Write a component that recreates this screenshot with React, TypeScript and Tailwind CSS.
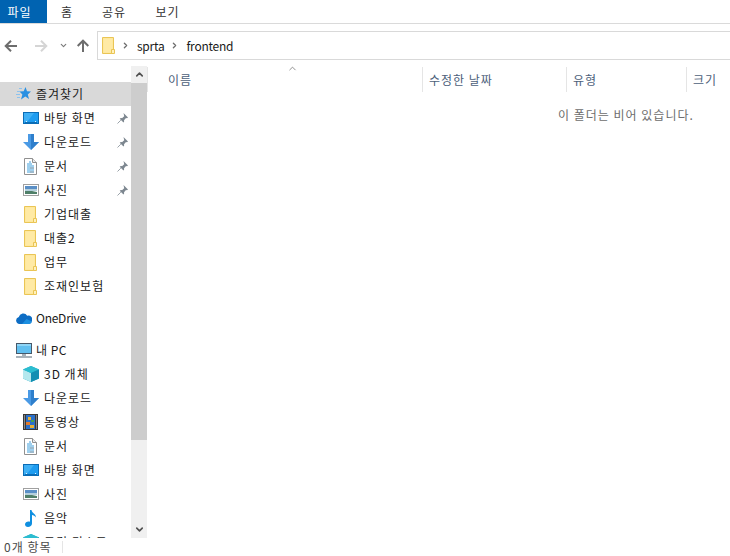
import { ChevronUp, ChevronDown, ChevronRight } from "lucide-react";

const font = "font-['Noto_Sans_CJK_KR','Noto_Sans',sans-serif]";

const Folder = () => (
  <svg width="13" height="17" viewBox="0 0 13 17" className="shrink-0">
    <path d="M.5.5h11v16H.5z" fill="#fee595" stroke="#eac555" />
    <path d="M1.500 1.500h9v14h-9z" fill="#ffeaa5" />
    <path d="M9.500 12.500h3v4h-3z" fill="#fff1bd" stroke="#eac555" />
  </svg>
);

const Desktop = () => (
  <svg width="16" height="12" viewBox="0 0 16 12" className="shrink-0">
    <rect x="0.500" y="0.500" width="15" height="11" fill="#1e9cf0" stroke="#0b6cb5" />
    <path d="M1 1h10L4 10H1z" fill="#3fb0f5" />
    <path d="M2 10.500h12" stroke="#0b6cb5" />
    <path d="M3 9.500h1M12 9.500h1" stroke="#d8f0ff" />
  </svg>
);

const Download = () => (
  <svg width="16" height="16" viewBox="0 0 16 16" className="shrink-0">
    <path d="M5 0h6v8h5l-8 8-8-8h5z" fill="#4a9ae5" />
    <path d="M8 0h3v8h5l-8 8z" fill="#2f7fcc" />
  </svg>
);

const Doc = () => (
  <svg width="13" height="17" viewBox="0 0 13 17" className="shrink-0">
    <path d="M.5.5h8l4 4v12H.5z" fill="#fff" stroke="#909090" />
    <path d="M8.500.500v4h4" fill="#e8e8e8" stroke="#909090" />
    <path d="M5 4h2M3 6h5M3 8h7M3 10h7M3 12h7M3 14h7" stroke="#3f9fdc" />
    <path d="M6 10h4M6 14h4" stroke="#9aa4ac" />
  </svg>
);

const Picture = () => (
  <svg width="16" height="12" viewBox="0 0 16 12" className="shrink-0">
    <rect x="0.500" y="0.500" width="15" height="11" fill="#fff" stroke="#a0a0a0" />
    <rect x="2" y="2" width="12" height="3" fill="#5a8fc6" />
    <rect x="2" y="5" width="12" height="2" fill="#b4cfdc" />
    <path d="M2 7h7l5 1v2H2z" fill="#4f7f68" />
  </svg>
);

const Film = () => (
  <svg width="15" height="16" viewBox="0 0 15 16" className="shrink-0">
    <rect width="15" height="16" fill="#383838" />
    <rect x="3" y="1" width="9" height="14" fill="#2a6fc9" />
    <path d="M5 3h3v3H5z" fill="#e6b034" />
    <path d="M8 6h3v2H8z" fill="#4aa04a" />
    <path d="M3 8h4v3H3z" fill="#e07c2e" />
    <path d="M7 11h4v3H7z" fill="#e6b034" />
    <path d="M1 2h1M1 4h1M1 6h1M1 8h1M1 10h1M1 12h1M1 14h1M13 2h1M13 4h1M13 6h1M13 8h1M13 10h1M13 12h1M13 14h1" stroke="#d8d8d8" />
  </svg>
);

const Music = () => (
  <svg width="12" height="17" viewBox="0 0 12 17" className="shrink-0">
    <path d="M5 0h1.500c.3 3 4.500 3.500 4.500 7.500-1-1.600-2.600-2.400-4-2.600V13.500C7 15.600 5 17 3 17S0 15.800 0 14.200 1.800 11.400 3.400 11.400c.6 0 1.200.1 1.600.4z" fill="#0f8fe0" />
  </svg>
);

const Cube = () => (
  <svg width="16" height="16" viewBox="0 0 16 16" className="shrink-0">
    <path d="M8 0l8 3.500v9L8 16l-8-3.500v-9z" fill="#1fa8c2" />
    <path d="M0 3.500L8 7v9l-8-3.500z" fill="#b5e8ee" />
    <path d="M8 0l8 3.500L8 7 0 3.500z" fill="#2cbdd0" />
    <path d="M8 7l8-3.500v9L8 16z" fill="#148fb2" />
  </svg>
);

const Star = () => (
  <svg width="15" height="14" viewBox="0 0 15 14" className="shrink-0">
    <path d="M9.500 0l1.500 4.200 4 .3-3.200 2.900 1.200 4.600-3.700-2.500-4.300 3 1.400-5L3.500 4.600l4.200-.4z" fill="#2a90e2" />
    <path d="M3 1.500h3M1 4.500h3M0 7.500h4M1 10.500h3" stroke="#8cc2ee" />
  </svg>
);

const Cloud = () => (
  <svg width="16" height="11" viewBox="0 0 16 11" className="shrink-0">
    <path d="M3.500 11A3.500 3.500 0 0 1 2.800 4.100 4.600 4.600 0 0 1 11.200 2.700 3.900 3.900 0 0 1 15.900 8 3.300 3.300 0 0 1 13 11z" fill="#0d6dc4" />
    <path d="M6 11l4.500-5 5.400 2.500A3 3 0 0 1 13 11z" fill="#1c8fe0" />
  </svg>
);

const Monitor = () => (
  <svg width="16" height="15" viewBox="0 0 16 15" className="shrink-0">
    <rect x="0.500" y="0.500" width="15" height="10" fill="#62c0f0" stroke="#47596a" />
    <path d="M1 1h14v2H1z" fill="#8fd5f6" />
    <path d="M6 11h4v2H6z" fill="#a8b2ba" />
    <path d="M0 14h16" stroke="#8c98a2" strokeWidth="1.500" />
  </svg>
);

const PinIcon = () => (
  <svg width="11" height="11" viewBox="0 0 11 11" className="absolute left-[117px] top-[7px]">
    <path d="M6.500 0L11 4.500l-1 .7-1-.2-2 2.200c.3 1 .1 1.700-.5 2.300L2.700 5.700c.6-.6 1.300-.8 2.300-.5l2.200-2-.2-1z" fill="#7d8790" />
    <path d="M.500 10.500L3.800 7.200" stroke="#9aa2a9" />
  </svg>
);

const Arrow = ({ dir, color }: { dir: "l" | "r" | "u"; color: string }) => (
  <svg width="14" height="14" viewBox="0 0 14 14" fill="none" stroke={color} strokeWidth="2" className={`shrink-0 ${dir === "r" ? "rotate-180" : dir === "u" ? "rotate-90" : ""}`}>
    <path d="M13 7H2M7 1.700L1.700 7 7 12.300" />
  </svg>
);

type Item = { label: string; icon: React.ReactNode; pin?: boolean; active?: boolean; indent?: boolean; gap?: boolean; track?: string };

const items: Item[] = [
  { label: "즐겨찾기", icon: <Star />, active: true },
  { label: "바탕 화면", icon: <Desktop />, pin: true, indent: true },
  { label: "다운로드", icon: <Download />, pin: true, indent: true },
  { label: "문서", icon: <Doc />, pin: true, indent: true },
  { label: "사진", icon: <Picture />, pin: true, indent: true },
  { label: "기업대출", icon: <Folder />, indent: true },
  { label: "대출2", icon: <Folder />, indent: true },
  { label: "업무", icon: <Folder />, indent: true },
  { label: "조재인보험", icon: <Folder />, indent: true },
  { label: "OneDrive", icon: <Cloud />, gap: true, track: "tracking-[-0.25px]" },
  { label: "내 PC", icon: <Monitor />, gap: true, track: "tracking-[0.5px]" },
  { label: "3D 개체", icon: <Cube />, indent: true },
  { label: "다운로드", icon: <Download />, indent: true },
  { label: "동영상", icon: <Film />, indent: true },
  { label: "문서", icon: <Doc />, indent: true },
  { label: "바탕 화면", icon: <Desktop />, indent: true },
  { label: "사진", icon: <Picture />, indent: true },
  { label: "음악", icon: <Music />, indent: true },
  { label: "로컬 디스크", icon: <Cube />, indent: true },
];

const NavRow = ({ item }: { item: Item }) => (
  <div className={`relative flex h-6 shrink-0 items-center ${item.gap ? "mt-2" : ""} ${item.active ? "bg-[#d9d9d9]" : ""}`}>
    <div className={`flex w-[17px] items-center justify-center ${item.indent ? "ml-[22px]" : "ml-[15px]"}`}>{item.icon}</div>
    <span className={`text-[12px] leading-6 text-[#1a1a1a] ${item.track ?? "tracking-[1px]"} ${item.indent ? "ml-[5px]" : "ml-[4px]"}`}>{item.label}</span>
    {item.pin && <PinIcon />}
  </div>
);

const Col = ({ label, width }: { label: string; width: string }) => (
  <div className={`flex h-[25px] shrink-0 items-center border-l border-[#e5e5e5] pl-[6px] text-[12px] tracking-[1px] text-[#4c607a] ${width}`}>{label}</div>
);

export default function App() {
  return (
    <div className={`${font} flex h-[556px] w-[730px] flex-col overflow-hidden bg-white`}>
      {/* ribbon tabs */}
      <div className="flex h-[24px] shrink-0 items-stretch border-b border-[#dadada] text-[12px] tracking-[1px] text-[#333]">
        <div className="flex h-[23px] w-[47px] items-center justify-center bg-[#0063b1] pr-[8px] text-white">파일</div>
        <div className="flex h-[23px] w-[40px] items-center justify-center">홈</div>
        <div className="flex h-[23px] w-[54px] items-center justify-center">공유</div>
        <div className="flex h-[23px] w-[53px] items-center justify-center">보기</div>
      </div>

      {/* address row */}
      <div className="flex h-[36px] shrink-0 items-start pt-[7px]">
        <div className="flex h-[29px] w-[97px] shrink-0 items-center">
          <div className="ml-[4px]"><Arrow dir="l" color="#6d6d6d" /></div>
          <div className="ml-[16px]"><Arrow dir="r" color="#d5d5d5" /></div>
          <ChevronDown size={9} strokeWidth={3} className="ml-[11px] text-[#7a7a7a]" />
          <div className="ml-[8px]"><Arrow dir="u" color="#6d6d6d" /></div>
        </div>
        <div className="flex h-[29px] flex-1 items-center border border-r-0 border-[#d9d9d9] pl-[4px] text-[12px] tracking-[-0.25px] text-[#1a1a1a]">
          <Folder />
          <ChevronRight size={9} strokeWidth={3.500} className="ml-[6px] text-[#6d6d6d]" />
          <span className="ml-[7px]">sprta</span>
          <ChevronRight size={9} strokeWidth={3.500} className="ml-[6px] text-[#6d6d6d]" />
          <span className="ml-[7px]">frontend</span>
        </div>
      </div>

      {/* body */}
      <div className="flex min-h-0 flex-1">
        {/* nav pane */}
        <div className="flex w-[131px] shrink-0 flex-col overflow-hidden pt-[22px]">
          {items.map((it, i) => (
            <NavRow key={i} item={it} />
          ))}
        </div>

        {/* scrollbar */}
        <div className="mt-[6px] flex w-[16px] shrink-0 flex-col bg-[#f0f0f0]">
          <div className="flex h-[17px] shrink-0 items-center justify-center">
            <ChevronUp size={11} strokeWidth={3.500} className="text-[#505050]" />
          </div>
          <div className="h-[357px] shrink-0 bg-[#cdcdcd]" />
          <div className="flex-1" />
          <div className="flex h-[17px] shrink-0 items-center justify-center">
            <ChevronDown size={11} strokeWidth={3.500} className="text-[#505050]" />
          </div>
        </div>

        {/* file list */}
        <div className="relative min-w-0 flex-1 pt-[7px]">
          <div className="flex">
            <div className="flex h-[25px] w-[275px] shrink-0 items-center border-l border-[#e5e5e5] pl-[20px] text-[12px] tracking-[1px] text-[#4c607a]">이름</div>
            <Col label="수정한 날짜" width="w-[144px]" />
            <Col label="유형" width="w-[120px]" />
            <Col label="크기" width="w-[44px]" />
          </div>
          <ChevronUp size={11} strokeWidth={1.800} className="absolute left-[140px] top-[3px] text-[#7a7a7a]" />
          <div className="mt-[14px] pl-[411px] text-[12px] leading-[18px] tracking-[1px] whitespace-nowrap text-[#6d6d6d]">이 폴더는 비어 있습니다.</div>
        </div>
      </div>

      {/* status bar */}
      <div className="z-10 flex h-[18px] shrink-0 items-center bg-white pl-[4px] text-[12px] tracking-[1px] text-[#4a4a4a]">
        <span className="w-[58px]">0개 항목</span>
        <div className="h-[12px] w-px bg-[#e5e5e5]" />
      </div>
    </div>
  );
}
